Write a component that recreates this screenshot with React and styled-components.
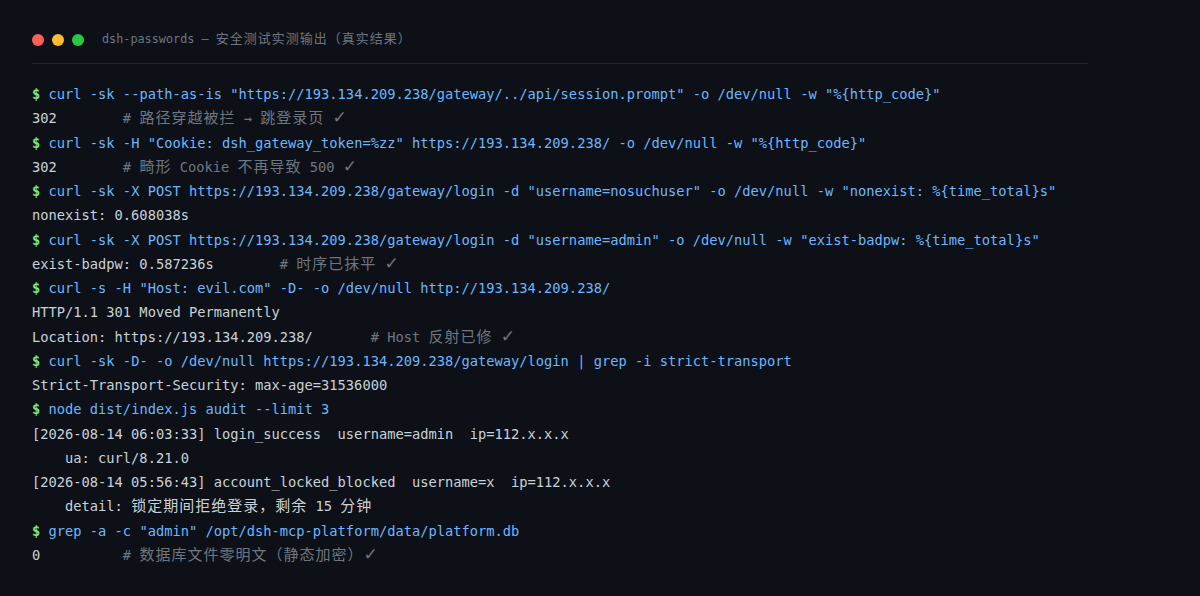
import React from 'react'
import styled, { createGlobalStyle } from 'styled-components'

const Global = createGlobalStyle`
  html, body { margin: 0; padding: 0; background: #0d1117; }
`

const Page = styled.div`
  width: 1120px;
  height: 596px;
  box-sizing: border-box;
  padding: 32px 32px 0;
  overflow: hidden;
  background: #0d1117;
  font-family: "DejaVu Sans Mono", monospace;
`

const TitleBar = styled.div`
  display: flex;
  align-items: center;
  height: 15px;
  padding-bottom: 16px;
  margin-bottom: 18px;
  border-bottom: 1px solid #21262d;
`

const Dots = styled.div`
  display: flex;
  gap: 8px;
  margin-right: 18px;
`

const Dot = styled.span`
  width: 12px;
  height: 12px;
  border-radius: 50%;
  background: ${p => p.$color};
`

const Title = styled.div`
  font-size: 11.8px;
  line-height: 15px;
  color: #6e7681;
  white-space: pre;
`

const Output = styled.div`
  display: flex;
  flex-direction: column;
`

const Line = styled.div`
  height: 24.26px;
  line-height: 24.26px;
  font-size: 13.72px;
  white-space: pre;
  color: ${p => (p.$cmd ? '#6cb6ff' : '#c9d1d9')};
`

const Prompt = styled.span`
  color: #7ee787;
  font-weight: bold;
`

const Comment = styled.span`
  color: #6e7681;
`

const Han = styled.span`
  font-family: "Noto Sans CJK SC", sans-serif;
  line-height: 0;
  font-size: ${p => (p.$small ? '13px' : '15px')};
  letter-spacing: 1px;
`

const Check = styled.span`
  font-family: "DejaVu Sans", sans-serif;
  line-height: 0;
  font-size: 17px;
`

// wrap runs of chinese text so they get their own font
function zh(text, small) {
  return text.split(/([\u4e00-\u9fff\uff08\uff09\uff0c]+|\u2713)/).map((part, i) => {
    if (part === '\u2713') return <Check key={i}>{part}</Check>
    return i % 2 ? <Han key={i} $small={small}>{part}</Han> : part
  })
}

const lines = [
  { cmd: 'curl -sk --path-as-is "https://193.134.209.238/gateway/../api/session.prompt" -o /dev/null -w "%{http_code}"' },
  { out: '302        ', note: '# 路径穿越被拦 → 跳登录页 ✓' },
  { cmd: 'curl -sk -H "Cookie: dsh_gateway_token=%zz" https://193.134.209.238/ -o /dev/null -w "%{http_code}"' },
  { out: '302        ', note: '# 畸形 Cookie 不再导致 500 ✓' },
  { cmd: 'curl -sk -X POST https://193.134.209.238/gateway/login -d "username=nosuchuser" -o /dev/null -w "nonexist: %{time_total}s"' },
  { out: 'nonexist: 0.608038s' },
  { cmd: 'curl -sk -X POST https://193.134.209.238/gateway/login -d "username=admin" -o /dev/null -w "exist-badpw: %{time_total}s"' },
  { out: 'exist-badpw: 0.587236s        ', note: '# 时序已抹平 ✓' },
  { cmd: 'curl -s -H "Host: evil.com" -D- -o /dev/null http://193.134.209.238/' },
  { out: 'HTTP/1.1 301 Moved Permanently' },
  { out: 'Location: https://193.134.209.238/       ', note: '# Host 反射已修 ✓' },
  { cmd: 'curl -sk -D- -o /dev/null https://193.134.209.238/gateway/login | grep -i strict-transport' },
  { out: 'Strict-Transport-Security: max-age=31536000' },
  { cmd: 'node dist/index.js audit --limit 3' },
  { out: '[2026-08-14 06:03:33] login_success  username=admin  ip=112.x.x.x' },
  { out: '    ua: curl/8.21.0' },
  { out: '[2026-08-14 05:56:43] account_locked_blocked  username=x  ip=112.x.x.x' },
  { out: '    detail: 锁定期间拒绝登录，剩余 15 分钟' },
  { cmd: 'grep -a -c "admin" /opt/dsh-mcp-platform/data/platform.db' },
  { out: '0          ', note: '# 数据库文件零明文（静态加密）✓' },
]

export default function App() {
  return (
    <Page>
      <Global />
      <TitleBar>
        <Dots>
          <Dot $color="#ff5f57" />
          <Dot $color="#febc2e" />
          <Dot $color="#28c840" />
        </Dots>
        <Title>{zh('dsh-passwords — 安全测试实测输出（真实结果）', true)}</Title>
      </TitleBar>
      <Output>
        {lines.map((line, i) =>
          line.cmd ? (
            <Line key={i} $cmd>
              <Prompt>$ </Prompt>
              {line.cmd}
            </Line>
          ) : (
            <Line key={i}>
              {zh(line.out)}
              {line.note && <Comment>{zh(line.note)}</Comment>}
            </Line>
          )
        )}
      </Output>
    </Page>
  )
}
